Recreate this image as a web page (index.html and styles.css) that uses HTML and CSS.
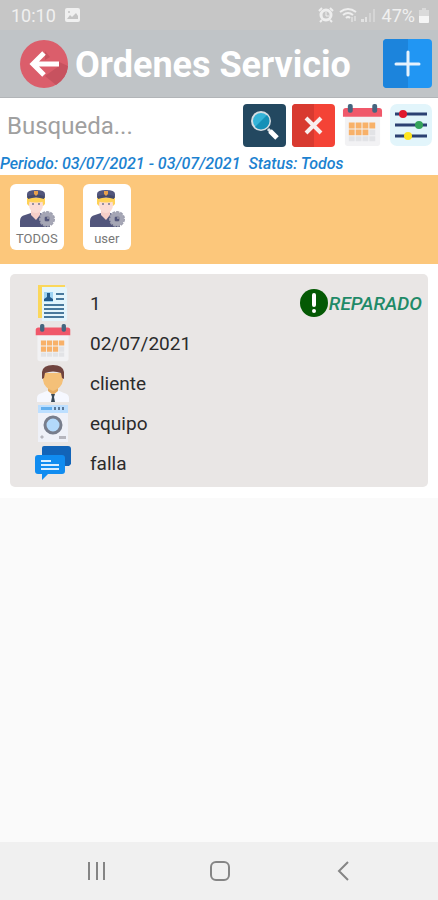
FILE: index.html
```
<!DOCTYPE html>
<html lang="es">

<head>
    <title>Ordenes Servicio</title>
    <meta charset="UTF-8">
    <meta name="viewport" content="width=device-width, initial-scale=1">
    <link rel="stylesheet" href="styles.css">
</head>

<body>
    <svg class="symbols" aria-hidden="true">
        <symbol id="calendar" viewBox="0 0 44 44">
            <path fill="#f2f2f4" d="M4 11h36v29a3 3 0 0 1-3 3H7a3 3 0 0 1-3-3z" />
            <path fill="#f0586a" d="M5 4h34a3 3 0 0 1 3 3v6H2V7a3 3 0 0 1 3-3z" />
            <rect x="7" y="0" width="5" height="9" rx="2" fill="#45657f" />
            <rect x="32" y="0" width="5" height="9" rx="2" fill="#45657f" />
            <path fill="#f8b169" d="M8 19h6v6H8zM15 19h6v6h-6zM22 19h6v6h-6zM29 19h6v6h-6zM8 26h6v6H8zM15 26h6v6h-6zM22 26h6v6h-6z" />
            <path fill="#e2e3e6" d="M29 26h6v6h-6zM8 33h6v5H8zM15 33h6v5h-6zM22 33h6v5h-6zM29 33h6v5h-6z" />
        </symbol>
        <symbol id="officer" viewBox="0 0 36 38">
            <path fill="#52567c" d="M1 38v-6q0-5 5-6l6-2h9l6 2q4 1 4 5v7z" />
            <path fill="#f7cfc8" d="M12 20h9v6l-4 5-5-5z" />
            <path fill="#ffd257" d="M8 8h18v7l-2 2H10l-2-2z" />
            <ellipse cx="17" cy="16" rx="7" ry="8" fill="#fbdcd5" />
            <path fill="#ffd257" d="M8 9h18v3q-9 3-18 0z" />
            <path fill="#52567c" d="M8 5q0-4 9-4t9 4v4q-9-3-18 0z" />
            <path fill="#454968" d="M9 7q8-3 16 0v3q-8-3-16 0z" />
            <path fill="#e9a14c" d="M15 2h4v3l-2 2-2-2z" />
            <circle cx="14" cy="15" r="1" fill="#777790" />
            <circle cx="20" cy="15" r="1" fill="#777790" />
            <circle cx="28" cy="30" r="7" fill="none" stroke="#9a9cac" stroke-width="2" stroke-dasharray="3 1" />
            <circle cx="28" cy="30" r="7" fill="#a5a6b5" />
            <circle cx="28" cy="30" r="3" fill="#8a8c9f" />
            <path d="M27 28v3h3" fill="none" stroke="#52567c" stroke-width="2" />
        </symbol>
    </svg>

    <header class="top">
        <div class="status-bar">
            <span>10:10</span>
            <svg class="status-photo" width="15" height="14" viewBox="0 0 15 14">
                <rect width="15" height="14" rx="2" fill="#f0f0f0" />
                <path fill="#c5c5c5" d="M2 11l3-4 2 2 4-4 2 3v3z" />
                <circle cx="4" cy="4" r="1" fill="#c5c5c5" />
            </svg>
            <svg class="status-icons" width="60" height="16" viewBox="0 0 60 16">
                <g fill="none" stroke="#eee">
                    <circle cx="8" cy="8" r="5" stroke-width="3" />
                    <path stroke-width="2" d="M1 4l3-3M12 1l3 3M4 13l-2 2M12 13l2 2" />
                    <path d="M8 5v4h3" />
                    <path stroke-width="2" d="M22 5q8-6 16 0M25 8q5-4 10 0M28 11q2-2 4 0" />
                    <path d="M34 10v5M37 9v5" />
                </g>
                <path fill="#e2e2e2" d="M43 15v-3h3v3zM47 15v-5h2v5z" />
                <path fill="#d5d5d5" d="M51 15V6h2v9zM55 15V2h2v13z" />
            </svg>
            <span>47%</span>
            <svg class="status-battery" width="10" height="15" viewBox="0 0 10 15">
                <path fill="#dadada" d="M3 0h4v2h3v6H0V2h3z" />
                <path fill="#f5f5f5" d="M0 8h10v6a1 1 0 0 1-1 1H1a1 1 0 0 1-1-1z" />
            </svg>
        </div>
        <div class="title-bar">
            <button class="icon-button" type="button" aria-label="Volver">
                <svg width="49" height="49" viewBox="0 0 49 49">
                    <circle cx="24" cy="25" r="24" fill="#db5e6b" />
                    <path fill="#c7525f" d="M39 27L25 37l11 9q11-7 12-19l-9-4zM25 12l5 6-5 3z" />
                    <path d="M39 25H13M24 14L13 25l11 11" fill="none" stroke="#fff" stroke-width="5" />
                </svg>
            </button>
            <h1>Ordenes Servicio</h1>
            <button class="icon-button" type="button" aria-label="Agregar">
                <svg width="49" height="49" viewBox="0 0 49 49">
                    <rect width="49" height="49" rx="4" fill="#2196f3" />
                    <path fill="#1c84dc" d="M4 0h21v49H4a4 4 0 0 1-4-4V4a4 4 0 0 1 4-4z" />
                    <path d="M25 13v23M13 25h23" stroke="#e6f2fd" stroke-width="3" stroke-linecap="round" />
                </svg>
            </button>
        </div>
    </header>

    <main>
        <form class="search">
            <input type="text" name="busqueda" placeholder="Busqueda..." aria-label="Busqueda">
            <button class="icon-button" type="button" aria-label="Buscar">
                <svg width="43" height="43" viewBox="0 0 43 43">
                    <rect width="43" height="43" rx="4" fill="#234860" />
                    <path d="M25 25l8 8" stroke="#dfe5e8" stroke-width="3" />
                    <path d="M27 27l7 7" stroke="#fff" stroke-width="5" />
                    <circle cx="18" cy="17" r="9" fill="#35b4d8" stroke="#d5dde2" stroke-width="2" />
                    <path fill="#1591b8" d="M24 11a8 8 0 0 1-12 12z" />
                </svg>
            </button>
            <button class="icon-button" type="button" aria-label="Limpiar">
                <svg width="43" height="43" viewBox="0 0 43 43">
                    <rect width="43" height="43" rx="4" fill="#f44336" />
                    <path fill="#d83a30" d="M4 0h18v43H4a4 4 0 0 1-4-4V4a4 4 0 0 1 4-4z" />
                    <path d="M14 14l15 15M29 14L14 29" stroke="#f8eeee" stroke-width="4" />
                </svg>
            </button>
            <button class="icon-button" type="button" aria-label="Periodo">
                <svg width="43" height="43"><use href="#calendar" /></svg>
            </button>
            <button class="icon-button" type="button" aria-label="Filtros">
                <svg width="43" height="43" viewBox="0 0 43 43">
                    <rect width="42" height="42" rx="7" fill="#e2f5fb" />
                    <path d="M5 10h32M5 21h32M5 32h32" stroke="#2b4172" stroke-width="3" />
                    <circle cx="13" cy="10" r="4" fill="#e0182d" />
                    <circle cx="29" cy="21" r="4" fill="#35a35a" />
                    <circle cx="18" cy="32" r="4" fill="#ffe51e" />
                </svg>
            </button>
        </form>
        <p class="filters">Periodo: 03/07/2021 - 03/07/2021&nbsp; Status: Todos</p>

        <div class="users">
            <button class="user" type="button">
                <svg width="36" height="38"><use href="#officer" /></svg>
                TODOS
            </button>
            <button class="user" type="button">
                <svg width="36" height="38"><use href="#officer" /></svg>
                user
            </button>
        </div>

        <section class="orders">
            <article class="order">
                <ul>
                    <li>
                        <svg width="38" height="38" viewBox="0 0 38 38">
                            <path fill="#fbd75b" d="M4 1h27v33H4z" />
                            <path fill="#e3f5fc" d="M8 3h23a2 2 0 0 1 2 2v30a2 2 0 0 1-2 2H8z" />
                            <path fill="#9ed3f2" d="M10 8h9v10h-9z" />
                            <path fill="#235b8c" d="M13 9h3v4l3 2v2h-9v-2l3-2z" />
                            <path d="M22 10h8M22 15h8M10 21h20M10 25h20M10 29h20M10 33h20" stroke="#48799c" stroke-width="2" />
                        </svg>
                        1
                    </li>
                    <li>
                        <svg width="38" height="38"><use href="#calendar" /></svg>
                        02/07/2021
                    </li>
                    <li>
                        <svg width="38" height="38" viewBox="0 0 38 38">
                            <path fill="#f6f8ff" d="M3 38v-4q0-4 5-5l7-3h8l7 3q5 1 5 5v4z" />
                            <path fill="#e4aa61" d="M14 22h10v5l-5 4-5-4z" />
                            <path fill="#f4c078" d="M9 9h20v7q-1 8-10 11Q10 24 9 16z" />
                            <path fill="#70443f" d="M8 15V8q1-7 11-7t11 7v7l-2-1-1-5q-8-3-16 0l-1 5z" />
                            <path fill="#394957" d="M17 30h4l-1 3 1 5h-4l1-5z" />
                        </svg>
                        cliente
                    </li>
                    <li>
                        <svg width="38" height="38" viewBox="0 0 38 38">
                            <path fill="#eff1f8" d="M4 8h30v30H4z" />
                            <path fill="#bddfff" d="M4 1h30v8H4z" />
                            <path fill="#64afed" d="M7 3h11v3H7z" />
                            <path fill="#5b7898" d="M20 3h2v3h-2zM24 3h2v3h-2zM28 3h2v3h-2z" />
                            <circle cx="19" cy="21" r="8" fill="#b3d9fb" stroke="#777d8c" stroke-width="3" />
                            <path fill="#b6b6be" d="M25 32h7v3h-7zM8 31l2 2-2 2-2-2z" />
                        </svg>
                        equipo
                    </li>
                    <li>
                        <svg width="38" height="38" viewBox="0 0 38 38">
                            <path fill="#1264b8" d="M10 2h24a3 3 0 0 1 3 3v15l-2 2H8V4a2 2 0 0 1 2-2z" />
                            <path fill="#108cf0" d="M4 11h24a3 3 0 0 1 3 3v13a3 3 0 0 1-3 3H14l-6 6v-6H4a3 3 0 0 1-3-3V14a3 3 0 0 1 3-3z" />
                            <path d="M7 17h10M7 21h18M7 25h18" stroke="#d9eeff" stroke-width="2" />
                        </svg>
                        falla
                    </li>
                </ul>
                <p class="state">
                    <svg width="29" height="29" viewBox="0 0 29 29">
                        <circle cx="14" cy="14" r="14" fill="#045904" />
                        <path d="M14 6v10" stroke="#fff" stroke-width="4" stroke-linecap="round" />
                        <circle cx="14" cy="22" r="2" fill="#fff" />
                    </svg>
                    REPARADO
                </p>
            </article>
        </section>
    </main>

    <nav class="system-nav">
        <button class="icon-button" type="button" aria-label="Recientes">
            <svg width="24" height="24" viewBox="0 0 24 24">
                <path d="M4 3v18M12 3v18M19 3v18" stroke="#858585" stroke-width="2" />
            </svg>
        </button>
        <button class="icon-button" type="button" aria-label="Inicio">
            <svg width="24" height="24" viewBox="0 0 24 24">
                <rect x="3" y="3" width="18" height="18" rx="5" fill="none" stroke="#858585" stroke-width="2" />
            </svg>
        </button>
        <button class="icon-button" type="button" aria-label="Atras">
            <svg width="24" height="24" viewBox="0 0 24 24">
                <path d="M17 3L8 12l9 9" fill="none" stroke="#858585" stroke-width="2" />
            </svg>
        </button>
    </nav>
</body>

</html>
```
FILE: styles.css
```
* {
    box-sizing: border-box;
}
body {
    display: flex;
    flex-direction: column;
    min-height: 100vh;
    margin: 0;
    background: #fafafa;
    color: #2b2b2b;
    font-family: Roboto, "Liberation Sans", sans-serif;
}
svg {
    display: block;
    flex: none;
}
.symbols {
    position: absolute;
    width: 0;
    height: 0;
}
.icon-button {
    flex: none;
    padding: 0;
    border: 0;
    background: none;
}
.top {
    background: #c0c4c7;
    border-bottom: 1px solid #b2b5b8;
}
.status-bar {
    display: flex;
    align-items: center;
    height: 30px;
    padding: 0 9px 0 11px;
    background: #c6c6c6;
    color: #f0f0f0;
    font-size: 18px;
}
.status-photo {
    margin-left: 9px;
}
.status-icons {
    margin-left: auto;
    margin-right: 4px;
}
.status-battery {
    margin-left: 4px;
}
.title-bar {
    display: flex;
    align-items: center;
    gap: 6px;
    padding: 9px 6px 9px 20px;
}
h1 {
    flex: 1;
    margin: 0;
    padding-top: 4px;
    color: #fff;
    font-size: 36px;
    line-height: 45px;
    white-space: nowrap;
}
main {
    background: #fff;
}
.search {
    display: flex;
    align-items: center;
    gap: 6px;
    padding: 6px 5px 6px 7px;
}
.search input {
    flex: 1;
    min-width: 0;
    padding: 0;
    border: 0;
    background: none;
    font-family: inherit;
    font-size: 24px;
}
.search input::placeholder {
    color: #a0a0a0;
}
.filters {
    margin: 0;
    color: #1c82d0;
    font-size: 16px;
    font-style: italic;
    font-weight: 500;
    line-height: 22px;
    white-space: nowrap;
}
.users {
    display: flex;
    gap: 19px;
    padding: 9px 10px 14px;
    background: #fcc77b;
}
.user {
    display: flex;
    flex-direction: column;
    align-items: center;
    gap: 4px;
    height: 66px;
    padding: 5px 6px;
    border: 0;
    border-radius: 6px;
    background: #fff;
    color: #777;
    font-family: inherit;
    font-size: 13px;
}
.orders {
    padding: 10px 10px 11px;
}
.order {
    display: flex;
    justify-content: space-between;
    align-items: flex-start;
    padding: 9px 6px 4px 24px;
    border-radius: 5px;
    background: #e9e6e5;
}
.order ul {
    margin: 0;
    padding: 0;
    list-style: none;
}
.order li {
    display: flex;
    align-items: center;
    gap: 18px;
    height: 40px;
    font-size: 19px;
}
.state {
    display: flex;
    align-items: center;
    height: 40px;
    margin: 0;
    color: #1f8a68;
    font-size: 19px;
    font-style: italic;
    font-weight: 500;
}
.system-nav {
    display: flex;
    justify-content: space-around;
    align-items: center;
    height: 58px;
    margin-top: auto;
    padding: 0 34px 0 36px;
    background: #f0f0f0;
}
```
